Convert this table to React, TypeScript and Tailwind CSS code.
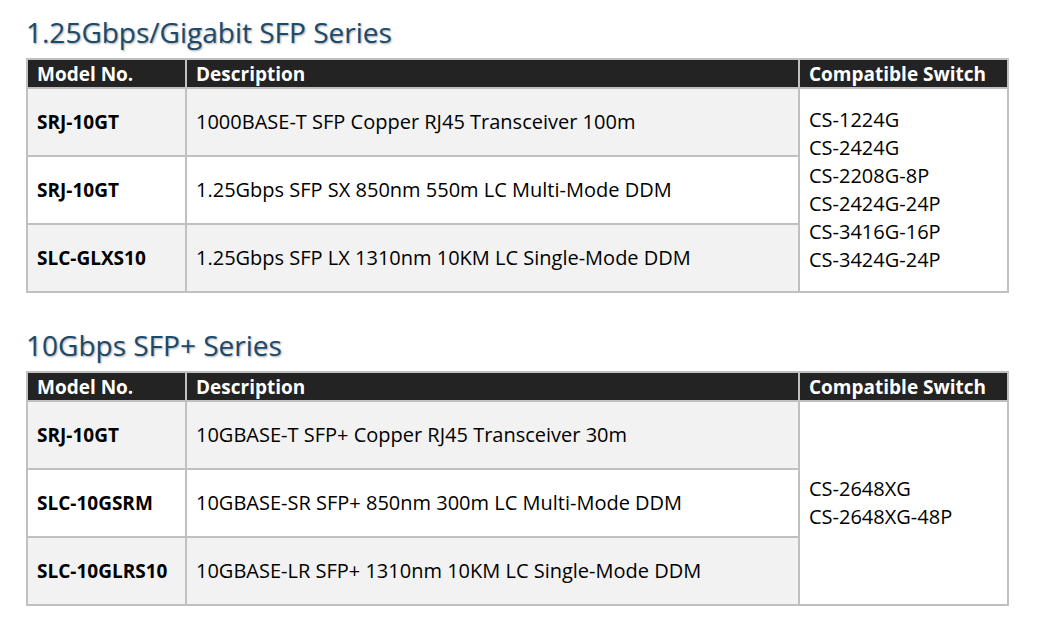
import React from 'react';

interface Row {
    model: string;
    desc: string;
}

interface Series {
    title: string;
    rows: Row[];
    switches: string[];
}

const series: Series[] = [
    {
        title: '1.25Gbps/Gigabit SFP Series',
        rows: [
            { model: 'SRJ-10GT', desc: '1000BASE-T SFP Copper RJ45 Transceiver 100m' },
            { model: 'SRJ-10GT', desc: '1.25Gbps SFP SX 850nm 550m LC Multi-Mode DDM' },
            { model: 'SLC-GLXS10', desc: '1.25Gbps SFP LX 1310nm 10KM LC Single-Mode DDM' },
        ],
        switches: ['CS-1224G', 'CS-2424G', 'CS-2208G-8P', 'CS-2424G-24P', 'CS-3416G-16P', 'CS-3424G-24P'],
    },
    {
        title: '10Gbps SFP+ Series',
        rows: [
            { model: 'SRJ-10GT', desc: '10GBASE-T SFP+ Copper RJ45 Transceiver 30m' },
            { model: 'SLC-10GSRM', desc: '10GBASE-SR SFP+ 850nm 300m LC Multi-Mode DDM' },
            { model: 'SLC-10GLRS10', desc: '10GBASE-LR SFP+ 1310nm 10KM LC Single-Mode DDM' },
        ],
        switches: ['CS-2648XG', 'CS-2648XG-48P'],
    },
];

const SeriesTable = ({ data, first }: { data: Series; first: boolean }) => (
    <section className={first ? '' : 'mt-[34px]'}>
        <h2 className="text-[28px] leading-[36px] font-medium text-[#1c4a6c] [text-shadow:1px_1px_2px_rgba(0,0,0,0.35)] mb-[8px]">
            {data.title}
        </h2>
        <table className="table-fixed border-collapse w-[981px] text-[20px] text-black">
            <colgroup>
                <col className="w-[159px]" />
                <col className="w-[613px]" />
                <col className="w-[209px]" />
            </colgroup>
            <thead>
                <tr className="h-[29px] bg-[#232323] text-white text-[19px]">
                    <th className="border-2 border-[#c0c0c0] text-left font-bold pl-[9px] leading-[24px]">Model No.</th>
                    <th className="border-2 border-[#c0c0c0] text-left font-bold pl-[9px] leading-[24px]">Description</th>
                    <th className="border-2 border-[#c0c0c0] text-left font-bold pl-[9px] leading-[24px]">Compatible Switch</th>
                </tr>
            </thead>
            <tbody>
                {data.rows.map((row, i) => (
                    <tr key={i} className={`h-[68px] ${i % 2 === 0 ? 'bg-[#f2f2f2]' : 'bg-white'}`}>
                        <td className="border-2 border-[#c0c0c0] pl-[9px] font-bold text-[19px]">{row.model}</td>
                        <td className="border-2 border-[#c0c0c0] pl-[9px]">{row.desc}</td>
                        {i === 0 && (
                            <td rowSpan={data.rows.length} className="border-2 border-[#c0c0c0] bg-white pl-[9px] align-middle">
                                {data.switches.map(s => (
                                    <div key={s} className="leading-[28px]">{s}</div>
                                ))}
                            </td>
                        )}
                    </tr>
                ))}
            </tbody>
        </table>
    </section>
);

export default function App() {
    return (
        <div className="w-[1041px] h-[637px] bg-white pl-[26px] pt-[14px] font-['Open_Sans',sans-serif]">
            {series.map((s, i) => (
                <SeriesTable key={s.title} data={s} first={i === 0} />
            ))}
        </div>
    );
}
